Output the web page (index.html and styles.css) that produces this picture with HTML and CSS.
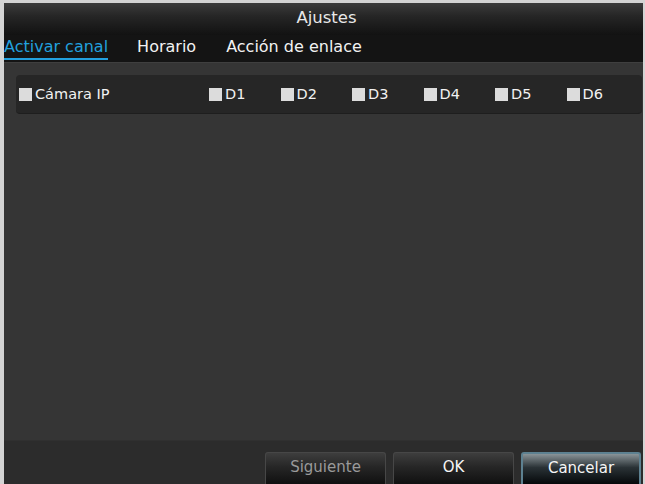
FILE: index.html
```html
<!DOCTYPE html>
<html>
<head>
<meta charset="utf-8">
<link rel="stylesheet" href="styles.css">
</head>
<body>
<div class="window">
  <div class="titlebar">Ajustes</div>
  <div class="tabs">
    <span class="tab active">Activar canal</span>
    <span class="tab second">Horario</span>
    <span class="tab">Acción de enlace</span>
  </div>
  <div class="content">
    <div class="row">
      <label class="item main"><span class="box"></span>Cámara IP</label>
      <div class="channels">
        <label class="item"><span class="box"></span>D1</label>
        <label class="item"><span class="box"></span>D2</label>
        <label class="item"><span class="box"></span>D3</label>
        <label class="item"><span class="box"></span>D4</label>
        <label class="item"><span class="box"></span>D5</label>
        <label class="item"><span class="box"></span>D6</label>
      </div>
    </div>
  </div>
  <div class="footer">
    <button class="btn disabled">Siguiente</button>
    <button class="btn">OK</button>
    <button class="btn primary">Cancelar</button>
  </div>
</div>
</body>
</html>
```
FILE: styles.css
```css
html, body {
  margin: 0;
  padding: 0;
  width: 645px;
  height: 484px;
  overflow: hidden;
  background: #d4d4d4;
}
body {
  font-family: "DejaVu Sans", "Liberation Sans", sans-serif;
}
.window {
  margin: 3px 2px 0 4px;
  height: 481px;
  display: flex;
  flex-direction: column;
  background: #353535;
}
.titlebar {
  height: 32px;
  flex: none;
  display: flex;
  align-items: center;
  justify-content: center;
  color: #e8e8e8;
  font-size: 16.5px;
  background: linear-gradient(#3c3c3c, #262626 40%, #121212);
  padding: 0 0 3px 6px;
  box-sizing: border-box;
}
.tabs {
  height: 28px;
  flex: none;
  display: flex;
  align-items: flex-start;
  background: #141414;
  padding-top: 2px;
  box-sizing: border-box;
  border-bottom: 1px solid #3f3f3f;
}
.tab {
  color: #f2f2f2;
  font-size: 16px;
  line-height: 20px;
  margin-right: 30px;
}
.tab.active {
  color: #22a0de;
  border-bottom: 2px solid #22a0de;
  padding-bottom: 1px;
  margin-right: 29px;
}
.content {
  flex: 1;
  padding: 12px 1px 0 12px;
}
.row {
  height: 38px;
  background: #262626;
  border-radius: 4px;
  display: flex;
  align-items: center;
  padding-left: 3px;
  border-bottom: 1px solid #1e1e1e;
}
.item {
  display: flex;
  align-items: center;
  color: #f2f2f2;
  font-size: 14.5px;
}
.main {
  width: 190px;
}
.channels {
  display: flex;
}
.channels .item {
  width: 71.5px;
}
.box {
  width: 13px;
  height: 13px;
  background: #dcdcdc;
  margin-right: 3px;
  flex: none;
}
.footer {
  height: 43px;
  flex: none;
  background: #2c2c2c;
  display: flex;
  justify-content: flex-end;
  align-items: flex-end;
  gap: 7px;
  padding-right: 2px;
  border-top: 1px solid #303030;
}
.btn {
  width: 121px;
  height: 32px;
  border: 1px solid #474747;
  border-bottom: none;
  border-radius: 3px 3px 0 0;
  background: linear-gradient(#3e3e3e, #262626 45%, #101010);
  color: #f5f5f5;
  font-family: "DejaVu Sans", "Liberation Sans", sans-serif;
  font-size: 15px;
  padding: 0 0 3px;
}
.btn.disabled {
  color: #9a9a9a;
}
.btn.primary {
  border: 2px solid #5d8191;
  border-bottom: none;
  background: linear-gradient(#8a9498, #2a3236 45%, #05080a);
  width: 120px;
}
```
